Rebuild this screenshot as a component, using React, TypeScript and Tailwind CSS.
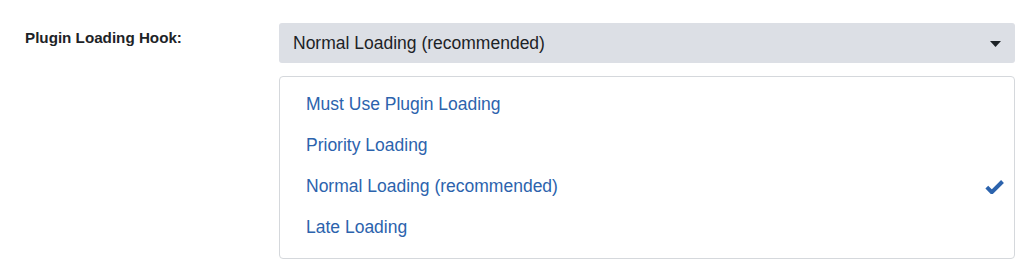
import { useState } from 'react';

const options = [
  'Must Use Plugin Loading',
  'Priority Loading',
  'Normal Loading (recommended)',
  'Late Loading',
];

export default function App() {
  const [selected, setSelected] = useState('Normal Loading (recommended)');

  return (
    <div className="w-[1024px] h-[274px] bg-white font-['Liberation_Sans',Arial,sans-serif]">
      <div className="flex pt-[23px] pl-[25px] pr-[9px]">
        <div className="w-[254px] pt-[5px] text-[15.2px] font-bold text-[#1d2327] leading-[20px]">
          Plugin Loading Hook:
        </div>

        <div className="flex-1 flex flex-col gap-[13px]">
          <button
            type="button"
            className="h-[40px] w-full flex items-center justify-between pl-[14px] pr-[14px] bg-[#dcdfe5] rounded-[3px] text-[17.5px] text-[#1d2327] text-left"
          >
            <span>{selected}</span>
            <svg width="11" height="6" viewBox="0 0 11 6" className="mt-[1px]">
              <path d="M0 0h11L5.5 6z" fill="#1d2327" />
            </svg>
          </button>

          <ul className="w-full border border-[#d5d8dc] rounded-[4px] bg-white pt-[7px] pb-[10px]">
            {options.map((opt) => (
              <li key={opt}>
                <button
                  type="button"
                  onClick={() => setSelected(opt)}
                  className="w-full h-[41px] flex items-center justify-between pl-[26px] pr-[10px] text-[17.5px] text-[#2c63ad] text-left"
                >
                  <span>{opt}</span>
                  {selected === opt && (
                    <svg width="19" height="14" viewBox="0 0 19 14">
                      <path d="M1.8 7.2l5 5L17.5 1.5" fill="none" stroke="#2c63ad" strokeWidth="4" strokeLinejoin="miter" />
                    </svg>
                  )}
                </button>
              </li>
            ))}
          </ul>
        </div>
      </div>
    </div>
  );
}
